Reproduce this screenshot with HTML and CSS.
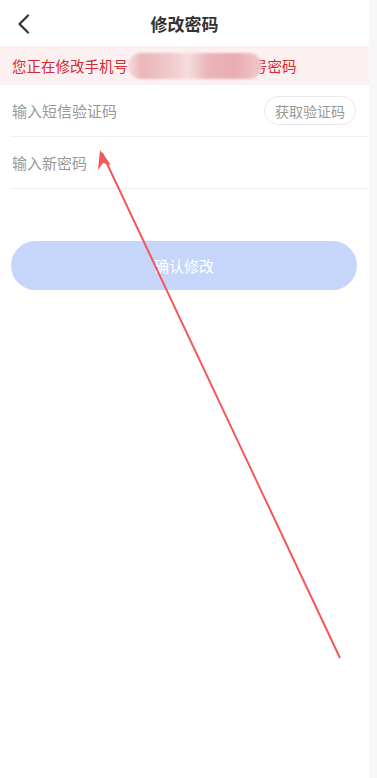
FILE: index.html
```html
<!DOCTYPE html>
<html>
<head>
	<title>修改密码</title>
	<link rel="stylesheet" href="styles.css">
</head>
<body>
	<div class="page">
		<div class="main">
			<div class="nav">
				<svg class="back" width="14" height="20" viewBox="0 0 14 20">
					<path d="M11 1.5 L2.5 10 L11 18.5" fill="none" stroke="#333" stroke-width="2.2" stroke-linecap="round" stroke-linejoin="round"/>
				</svg>
				<h2>修改密码</h2>
			</div>

			<div class="notice">
				<span>您正在修改手机号</span><span class="mask"></span><span class="tail">号密码</span>
			</div>

			<div class="form">
				<div class="row">
					<input type="text" placeholder="输入短信验证码">
					<button class="code-btn">获取验证码</button>
				</div>
				<div class="row">
					<input type="password" placeholder="输入新密码">
				</div>
			</div>

			<button class="submit">确认修改</button>
		</div>
		<div class="strip"></div>
	</div>

	<svg class="arrow" width="377" height="778" viewBox="0 0 377 778">
		<line x1="340" y1="658" x2="102" y2="153" stroke="#f2575a" stroke-width="2"/>
		<path d="M100 150 L98 170 L103 163 L111 165 Z" fill="#f2575a"/>
	</svg>
</body>
</html>
```

FILE: styles.css
```css
*{
	box-sizing: border-box;
}
body{
	margin: 0;
	background-color: #fff;
	font-family: "Noto Sans CJK SC", "Noto Sans", sans-serif;
}
.page{
	display: flex;
	min-height: 778px;
}
.main{
	width: 369px;
	background-color: #fff;
}
.strip{
	flex: 1;
	background-color: #f7f7f7;
}
.nav{
	height: 46px;
	display: flex;
	align-items: center;
	justify-content: center;
	position: relative;
}
.back{
	position: absolute;
	left: 17px;
	top: 14px;
}
.nav h2{
	margin: 0;
	font-size: 17px;
	font-weight: bold;
	color: #333;
}
.notice{
	height: 39px;
	background-color: #fdf0f1;
	color: #d42a33;
	font-size: 14.5px;
	display: flex;
	align-items: center;
	padding-left: 12px;
}
.mask{
	display: inline-block;
	width: 134px;
	height: 26px;
	margin-right: -9px;
	border-radius: 13px;
	background: linear-gradient(90deg, #f6dadc 0%, #eab4b8 10%, #f0c6c9 30%, #f6dcde 45%, #eab2b6 60%, #e9a9ae 80%, #f1c9cc 100%);
	filter: blur(1.2px);
	position: relative;
	z-index: 1;
	opacity: 0.95;
}
.form{
	padding-left: 11px;
}
.row{
	height: 52px;
	display: flex;
	align-items: center;
	justify-content: space-between;
	border-bottom: 1px solid #f0f0f0;
	padding-right: 13px;
}
.row input{
	border: none;
	outline: none;
	font-family: inherit;
	font-size: 15px;
	color: #333;
	padding: 0;
	padding-left: 1px;
	flex: 1;
	background: transparent;
}
.row input::placeholder{
	color: #999;
}
.code-btn{
	height: 29px;
	width: 92px;
	border: 1px solid #e8e8e8;
	border-radius: 15px;
	background-color: #fff;
	color: #999;
	font-family: inherit;
	font-size: 14px;
	padding: 0;
}
.submit{
	display: block;
	margin: 52px 12px 0 11px;
	width: 346px;
	height: 49px;
	border: none;
	border-radius: 25px;
	background-color: #c6d6fb;
	color: #fff;
	font-family: inherit;
	font-size: 15px;
}
.arrow{
	position: absolute;
	left: 0;
	top: 0;
	pointer-events: none;
}
```
